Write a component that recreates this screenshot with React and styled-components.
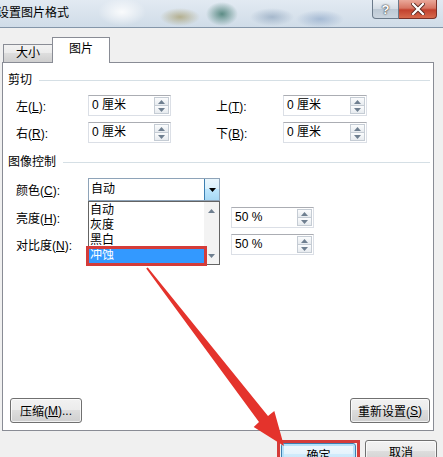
import React from 'react';
import styled, { createGlobalStyle, css } from 'styled-components';

const GlobalStyle = createGlobalStyle`
  html, body {
    margin: 0;
    padding: 0;
    background: #f0f0f0;
  }
  body {
    font-family: "Liberation Sans", "Noto Sans CJK SC", sans-serif;
    font-size: 12px;
    color: #000;
  }
  * {
    box-sizing: border-box;
  }
`;

const Window = styled.div`
  position: relative;
  width: 443px;
  height: 457px;
  overflow: hidden;
  background: #f0f0f0;
  display: flex;
  flex-direction: column;
`;

const TitleBar = styled.div`
  flex: none;
  height: 28px;
  display: flex;
  justify-content: space-between;
  align-items: flex-start;
  border-bottom: 1px solid #8496a9;
  background:
    radial-gradient(24px 14px at 122px 12px, rgba(255, 255, 255, 0.85), transparent),
    radial-gradient(20px 9px at 180px 17px, rgba(165, 155, 105, 0.7), transparent),
    radial-gradient(16px 12px at 222px 14px, rgba(70, 125, 115, 0.85), transparent),
    radial-gradient(22px 9px at 272px 17px, rgba(125, 150, 178, 0.55), transparent),
    radial-gradient(24px 9px at 320px 19px, rgba(120, 150, 190, 0.5), transparent),
    linear-gradient(#e2eaf2, #d0dce8);
`;

const Title = styled.div`
  margin-left: -3px;
  line-height: 27px;
  font-size: 12px;
  white-space: nowrap;
`;

const CaptionButtons = styled.div`
  display: flex;
  margin-right: 6px;
`;

const CaptionButton = styled.div`
  width: ${(p) => p.$w}px;
  height: 19px;
  display: flex;
  align-items: center;
  justify-content: center;
  border: 1px solid #6b7a8a;
  border-top: none;
  ${(p) =>
    p.$close
      ? css`
          border-color: #7a3027;
          border-left: none;
          border-radius: 0 0 4px 0;
          background: linear-gradient(#eaa89a, #d77563 45%, #c2412e 55%, #d66a4d);
        `
      : css`
          border-radius: 0 0 0 4px;
          background: linear-gradient(#edf1f5, #d3dbe4 50%, #bcc8d4 50%, #cbd5df);
          color: #fff;
          font-weight: bold;
          font-size: 13px;
          text-shadow: 0 0 2px #333, 0 0 1px #333;
        `}
`;

const Body = styled.div`
  flex: 1;
  display: flex;
  flex-direction: column;
  padding: 9px 9px 0 2px;
`;

const TabStrip = styled.div`
  position: relative;
  z-index: 1;
  height: 26px;
  margin-bottom: -1px;
  padding-left: 1px;
  display: flex;
  align-items: flex-end;
`;

const Tab = styled.div`
  border: 1px solid #898c95;
  border-bottom: none;
  white-space: nowrap;
  ${(p) =>
    p.$active
      ? css`
          height: 26px;
          margin-left: -1px;
          padding: 0 16px;
          line-height: 22px;
          background: #fff;
        `
      : css`
          height: 18px;
          margin-bottom: 1px;
          padding: 0 12px;
          line-height: 17px;
          background: linear-gradient(#f2f2f2, #ebebeb 50%, #dddddd 50%, #cfcfcf);
        `}
`;

const Panel = styled.div`
  flex: none;
  width: 432px;
  height: 369px;
  background: #fff;
  border: 1px solid #898c95;
  display: flex;
  flex-direction: column;
`;

const GroupHeader = styled.div`
  display: flex;
  align-items: center;
  gap: 7px;
  height: 16px;
  margin-top: ${(p) => p.$top}px;
  padding: 0 3px 0 5px;
  line-height: 16px;
  white-space: nowrap;
`;

const Rule = styled.div`
  flex: 1;
  height: 1px;
  background: #d5dfe5;
`;

const CropGrid = styled.div`
  display: grid;
  grid-template-columns: 72px 128px 67px 84px;
  grid-auto-rows: 21px;
  row-gap: 6px;
  align-items: center;
  margin-top: 7px;
  padding-left: 13px;
`;

const ControlGrid = styled.div`
  display: grid;
  grid-template-columns: 72px 143px 84px;
  grid-template-rows: 23px 21px 21px;
  row-gap: 6px;
  align-items: center;
  margin-top: 8px;
  padding-left: 13px;
`;

const Label = styled.div`
  white-space: nowrap;
  grid-column: 1;

  u {
    text-decoration: underline;
  }
`;

const RightLabel = styled(Label)`
  grid-column: 3;
`;

const SpinField = styled.div`
  width: ${(p) => p.$w}px;
  height: 21px;
  grid-column: ${(p) => p.$col};
  display: flex;
  padding: 1px 1px 1px 3px;
  border: 1px solid #dbdfe6;
  border-top-color: #abadb3;
  background: #fff;
`;

const SpinText = styled.div`
  flex: 1;
  line-height: 17px;
  white-space: nowrap;
`;

const SpinButtons = styled.div`
  width: 15px;
  display: flex;
  flex-direction: column;
`;

const SpinButton = styled.div`
  flex: 1;
  display: flex;
  align-items: center;
  justify-content: center;
  border: 1px solid #c5ccd4;
  background: linear-gradient(#fbfcfd, #e7ebef);

  & + & {
    border-top: none;
  }
`;

const ComboWrap = styled.div`
  position: relative;
  grid-column: 2 / span 2;
  width: 132px;
  height: 23px;
`;

const Combo = styled.div`
  height: 100%;
  display: flex;
  border: 1px solid #8ea3b8;
  background: #fff;
`;

const ComboText = styled.div`
  flex: 1;
  padding-left: 2px;
  line-height: 21px;
`;

const DropButton = styled.div`
  width: 15px;
  display: flex;
  align-items: center;
  justify-content: center;
  border-left: 1px solid #3c7fb1;
  background: linear-gradient(#eaf6fd, #d9f0fc 50%, #bee6fd 50%, #a7d9f5);
`;

const DropList = styled.div`
  position: absolute;
  top: 100%;
  left: 0;
  z-index: 2;
  width: 132px;
  height: 64px;
  display: flex;
  border: 1px solid #646464;
  background: #fff;
`;

const Items = styled.div`
  flex: 1;
  padding-top: 1px;
`;

const Item = styled.div`
  position: relative;
  height: 15px;
  padding-left: 1px;
  line-height: 15px;
  white-space: nowrap;
  ${(p) =>
    p.$selected &&
    css`
      background: #3399ff;
      color: #fff;

      &::after {
        content: '';
        position: absolute;
        inset: -2px -3px -3px -3px;
        border: 3px solid #d43c3a;
      }
    `}
`;

const ScrollBar = styled.div`
  width: 15px;
  display: flex;
  flex-direction: column;
  justify-content: space-between;
  align-items: center;
  padding: 7px 0 6px;
  background: #f3f3f3;
`;

const PanelButtons = styled.div`
  margin-top: auto;
  display: flex;
  justify-content: space-between;
  padding: 0 3px 7px 7px;
`;

const Button = styled.div`
  width: ${(p) => p.$w}px;
  height: ${(p) => p.$h || 25}px;
  flex: none;
  display: flex;
  align-items: center;
  justify-content: center;
  border: 1px solid #707070;
  border-radius: 3px;
  background: linear-gradient(#f2f2f2, #ebebeb 50%, #dddddd 50%, #cfcfcf);
  box-shadow: inset 0 0 0 1px rgba(255, 255, 255, 0.7);
  white-space: nowrap;
  ${(p) =>
    p.$default &&
    css`
      border-color: #3c7fb1;
      background: linear-gradient(#f0f8fd, #e3f3fc 50%, #cfebfb 50%, #c3e5f8);
      box-shadow: inset 0 0 0 2px #b6e2f9;
    `}
`;

const Footer = styled.div`
  display: flex;
  justify-content: flex-end;
  align-items: flex-start;
  gap: 5px;
  padding-top: 9px;
  margin-right: -3px;
`;

const Marker = styled.div`
  border: 3px solid #d43c3a;
  border-bottom: none;
  padding: 0 1px;
`;

const ArrowLayer = styled.svg`
  position: absolute;
  left: 0;
  top: 0;
  z-index: 5;
  pointer-events: none;
`;

const Up = () => (
  <svg width="7" height="4" viewBox="0 0 7 4">
    <path d="M0 4 L3.5 0 L7 4Z" fill="#6f7f90" />
  </svg>
);

const Down = () => (
  <svg width="7" height="4" viewBox="0 0 7 4">
    <path d="M0 0 L3.5 4 L7 0Z" fill="#6f7f90" />
  </svg>
);

const Spin = ({ value, w = 83, col = 2 }) => (
  <SpinField $w={w} $col={col}>
    <SpinText>{value}</SpinText>
    <SpinButtons>
      <SpinButton>
        <Up />
      </SpinButton>
      <SpinButton>
        <Down />
      </SpinButton>
    </SpinButtons>
  </SpinField>
);

const colorOptions = ['自动', '灰度', '黑白', '冲蚀'];

export default function App() {
  return (
    <>
      <GlobalStyle />
      <Window>
        <TitleBar>
          <Title>设置图片格式</Title>
          <CaptionButtons>
            <CaptionButton $w={27}>?</CaptionButton>
            <CaptionButton $w={38} $close>
              <svg width="14" height="12" viewBox="0 0 14 12">
                <path d="M2 1 L12 11 M12 1 L2 11" stroke="#5a2a22" strokeWidth="4" strokeLinecap="square" />
                <path d="M2 1 L12 11 M12 1 L2 11" stroke="#fff" strokeWidth="2.2" strokeLinecap="square" />
              </svg>
            </CaptionButton>
          </CaptionButtons>
        </TitleBar>

        <Body>
          <TabStrip>
            <Tab>大小</Tab>
            <Tab $active>图片</Tab>
          </TabStrip>

          <Panel>
            <GroupHeader $top={9}>
              剪切
              <Rule />
            </GroupHeader>
            <CropGrid>
              <Label>左(<u>L</u>):</Label>
              <Spin value="0 厘米" />
              <RightLabel>上(<u>T</u>):</RightLabel>
              <Spin value="0 厘米" w={84} col={4} />
              <Label>右(<u>R</u>):</Label>
              <Spin value="0 厘米" />
              <RightLabel>下(<u>B</u>):</RightLabel>
              <Spin value="0 厘米" w={84} col={4} />
            </CropGrid>

            <GroupHeader $top={11}>
              图像控制
              <Rule />
            </GroupHeader>
            <ControlGrid>
              <Label>颜色(<u>C</u>):</Label>
              <ComboWrap>
                <Combo>
                  <ComboText>自动</ComboText>
                  <DropButton>
                    <svg width="7" height="4" viewBox="0 0 7 4">
                      <path d="M0 0 L3.5 4 L7 0Z" fill="#000" />
                    </svg>
                  </DropButton>
                </Combo>
                <DropList>
                  <Items>
                    {colorOptions.map((o) => (
                      <Item key={o} $selected={o === '冲蚀'}>
                        {o}
                      </Item>
                    ))}
                  </Items>
                  <ScrollBar>
                    <Up />
                    <Down />
                  </ScrollBar>
                </DropList>
              </ComboWrap>
              <Label>亮度(<u>H</u>):</Label>
              <Spin value="50 %" w={83} col={3} />
              <Label>对比度(<u>N</u>):</Label>
              <Spin value="50 %" w={83} col={3} />
            </ControlGrid>

            <PanelButtons>
              <Button $w={72}>压缩(<u>M</u>)...</Button>
              <Button $w={80}>重新设置(<u>S</u>)</Button>
            </PanelButtons>
          </Panel>

          <Footer>
            <Marker>
              <Button $w={75} $h={23} $default>
                确定
              </Button>
            </Marker>
            <Button $w={72} $h={23}>
              取消
            </Button>
          </Footer>
        </Body>

        <ArrowLayer width="443" height="457" viewBox="0 0 443 457">
          <polygon
            points="147.8,267.4 146.2,268.6 259,422 253.7,426.9 284,446 274.3,411.1 268,416"
            fill="#e4332c"
          />
        </ArrowLayer>
      </Window>
    </>
  );
}
